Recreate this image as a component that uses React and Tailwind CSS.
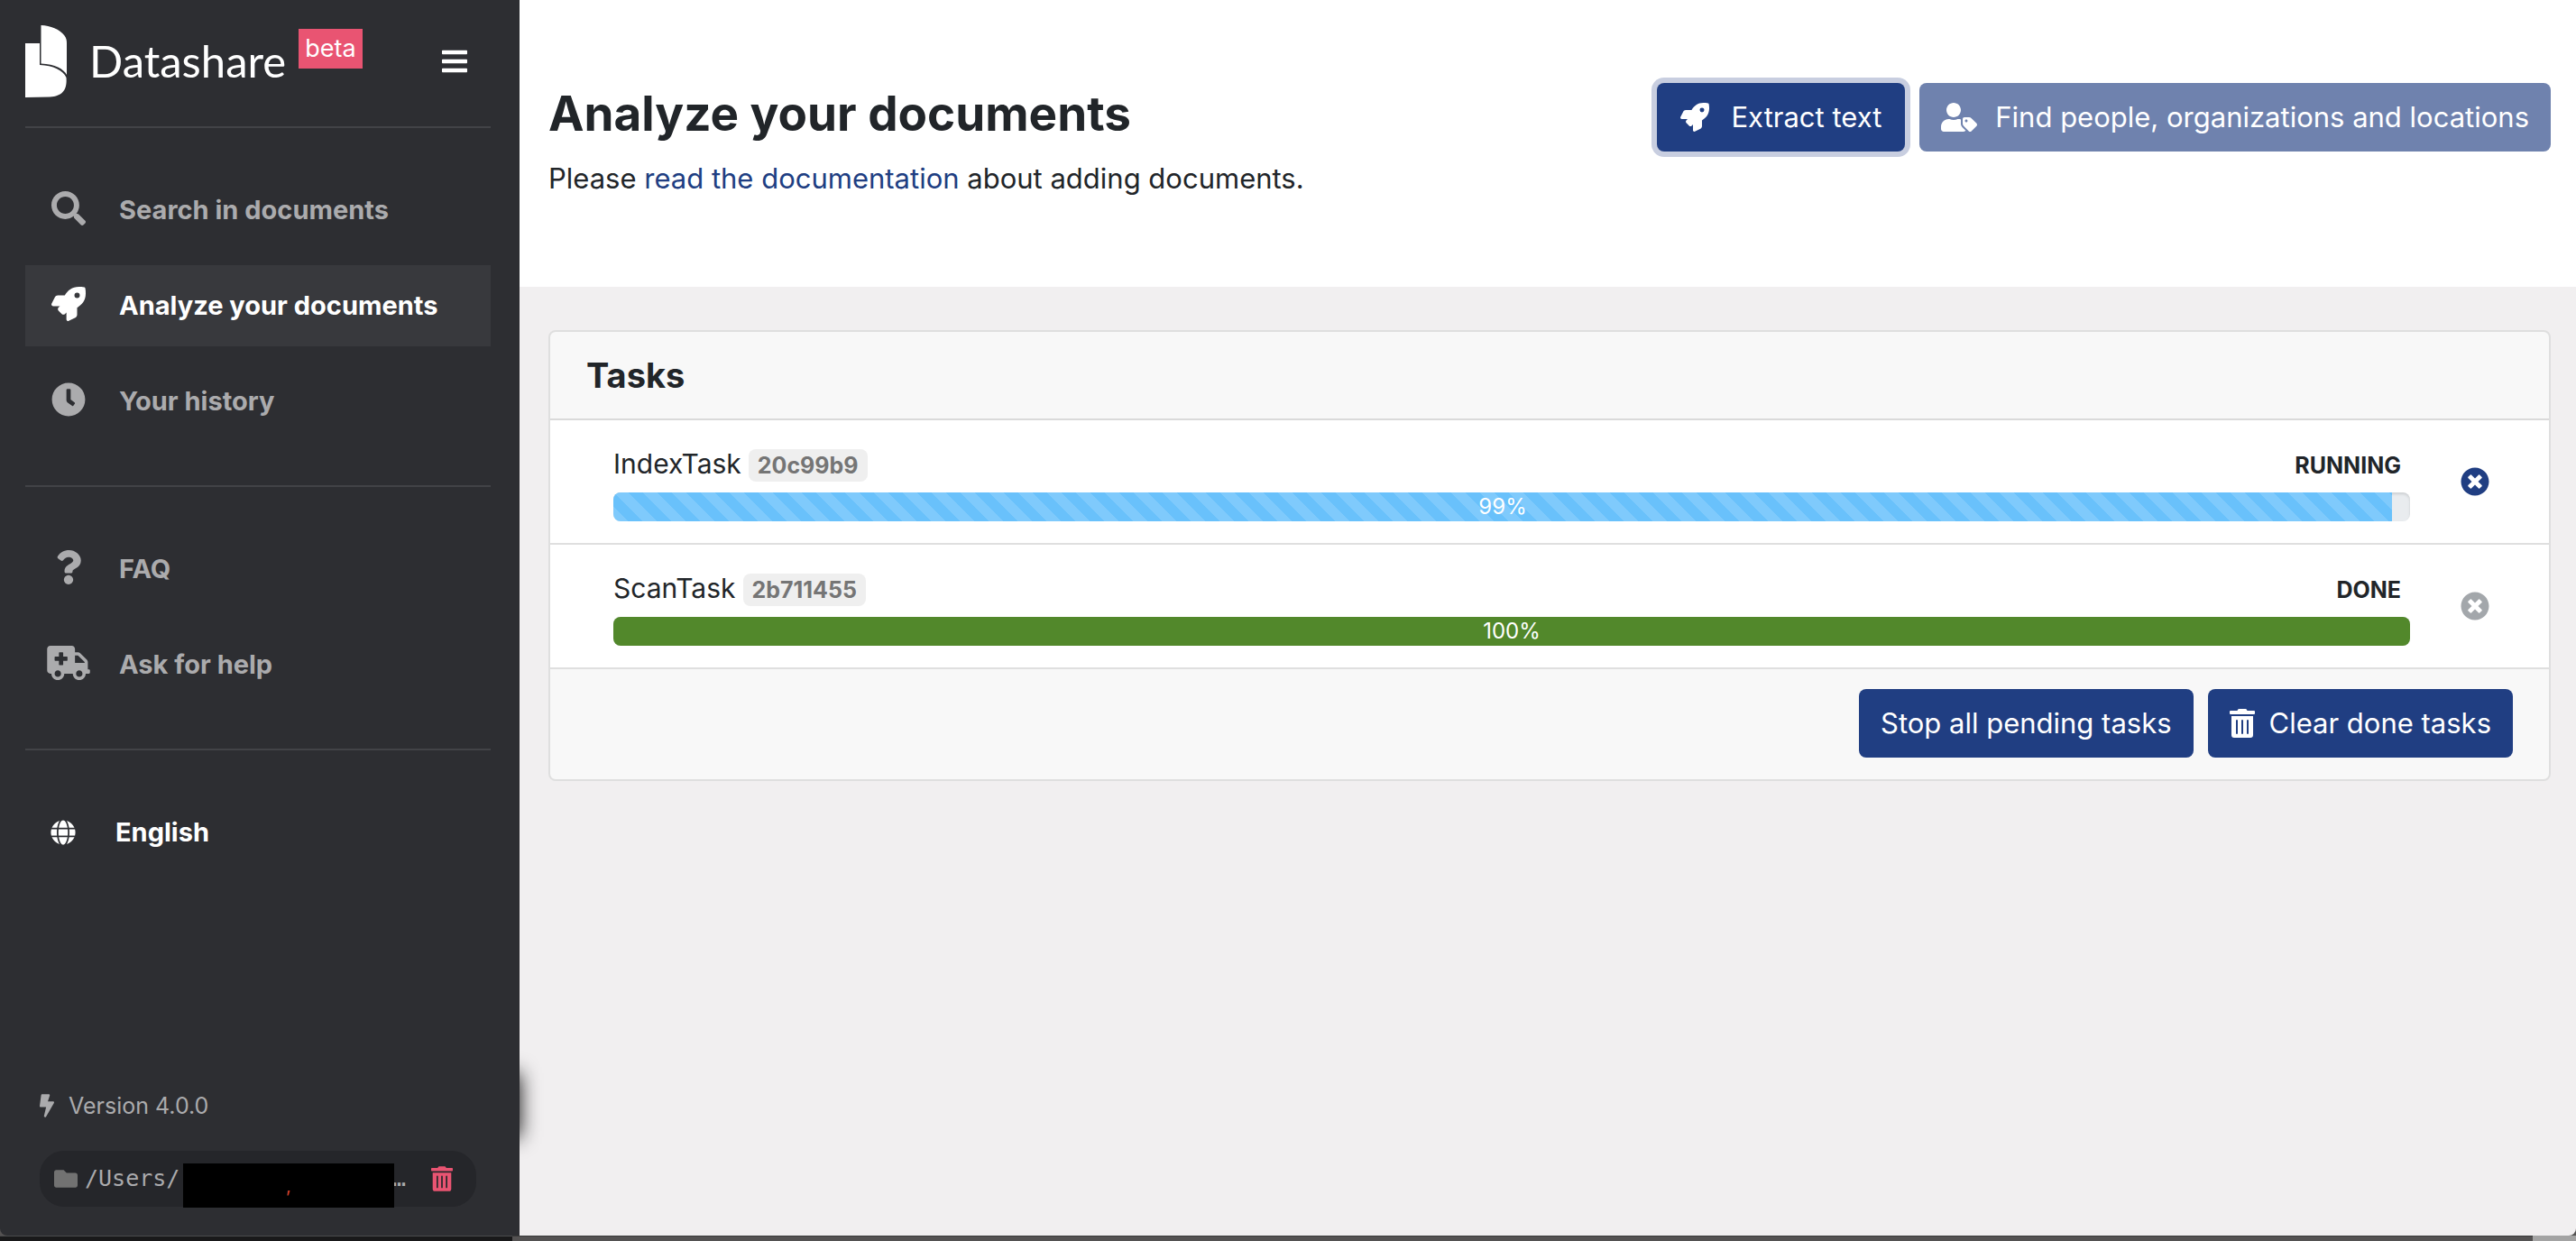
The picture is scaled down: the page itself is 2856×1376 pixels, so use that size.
import {
  FaAmbulance,
  FaBars,
  FaBolt,
  FaClock,
  FaFolder,
  FaGlobe,
  FaQuestion,
  FaRocket,
  FaSearch,
  FaTimesCircle,
  FaTrashAlt,
  FaUserTag,
} from "react-icons/fa";

const tasks = [
  { name: "IndexTask", id: "20c99b9", state: "RUNNING", progress: 99 },
  { name: "ScanTask", id: "2b711455", state: "DONE", progress: 100 },
];

function NavItem({ icon: Icon, label, active }) {
  return (
    <li>
      <a
        href="#"
        aria-current={active ? "page" : undefined}
        className={
          active
            ? "flex items-center gap-8 bg-[#38393d] px-6 py-6 text-white"
            : "flex items-center gap-8 px-6 py-6 text-[#ababad]"
        }
      >
        <Icon className="mb-1 h-[38px] w-12 shrink-0" />
        <span className="text-[29px] leading-[42px] font-bold">{label}</span>
      </a>
    </li>
  );
}

function Divider() {
  return <hr className="border-0 border-t-2 border-[#424347]" />;
}

function Logo() {
  return (
    <svg viewBox="0 0 46 80" className="h-20 w-[46px] shrink-0 fill-white" aria-hidden="true">
      <path d="M17.500 0C28 .3 38 4.500 43.500 11.500C45.500 14 46 17 46 20V55C42.500 48.500 33 43 17.500 42.500Z" />
      <path d="M0 20H16V44C31 44.500 42 50 45.500 58C46.500 70 42.500 79 27 79.500L0 80Z" />
    </svg>
  );
}

function Sidebar() {
  return (
    <aside className="relative flex w-[576px] shrink-0 flex-col">
      <div className="absolute top-[1190px] right-0 h-[71px] w-10 shadow-[0_0_22px_0_rgba(0,0,0,0.95)]" />
      <div className="relative flex grow flex-col rounded-bl-lg bg-[#2d2e32] pr-8 pl-7">
        <div className="flex items-start pt-7 pb-8">
          <a href="#" className="flex items-start text-white">
            <Logo />
            <span className="mt-2 ml-[25px] font-['Lato'] text-[49px] leading-[62px]">Datashare</span>
            <span className="mt-1 ml-3.5 bg-[#e95472] px-[7px] text-[27px] leading-[44px]">beta</span>
          </a>
          <button type="button" aria-label="Toggle menu" className="mt-6 mr-[26px] ml-auto text-white">
            <FaBars className="h-8 w-7" />
          </button>
        </div>
        <Divider />
        <ul className="flex flex-col gap-4 pt-[46px] pb-12">
          <NavItem icon={FaSearch} label="Search in documents" />
          <NavItem icon={FaRocket} label="Analyze your documents" active />
          <NavItem icon={FaClock} label="Your history" />
        </ul>
        <Divider />
        <ul className="flex flex-col gap-4 pt-[46px] pb-12">
          <NavItem icon={FaQuestion} label="FAQ" />
          <NavItem icon={FaAmbulance} label="Ask for help" />
        </ul>
        <Divider />
        <button
          type="button"
          className="mt-[46px] flex items-center gap-11 px-7 py-6 text-left text-white"
        >
          <FaGlobe className="h-7 w-7" />
          <span className="text-[29px] leading-[42px] font-bold">English</span>
        </button>
        <div className="mt-auto mr-4 mb-8 ml-4">
          <p className="flex items-center gap-4 text-[25px] leading-9 text-[#ababad]">
            <FaBolt className="h-[26px] w-4" />
            Version 4.0.0
          </p>
          <div className="relative mt-8 flex h-[62px] items-center rounded-[27px] bg-[#25262a] pr-[26px] pl-4">
            <FaFolder className="h-[26px] w-[26px] text-[#727272]" />
            <span className="ml-2 font-['DejaVu_Sans_Mono',monospace] text-[25px] leading-9 text-[#ababad]">
              /Users/
            </span>
            <span className="ml-auto font-['DejaVu_Sans_Mono',monospace] text-[25px] leading-9 text-[#ababad]">
              …
            </span>
            <button type="button" aria-label="Delete" className="ml-[28px] text-[#e95472]">
              <FaTrashAlt className="h-7 w-6" />
            </button>
            <span className="absolute top-3.5 left-[159px] h-[49px] w-[234px] bg-black text-center text-[20px] leading-[50px] text-[#d8432f]">
              ,
            </span>
          </div>
        </div>
      </div>
    </aside>
  );
}

function Task({ name, id, state, progress }) {
  const running = state === "RUNNING";
  return (
    <li className="flex items-center gap-14 border-b-2 border-[#dfdfdf] bg-white py-6 pr-[66px] pl-[70px]">
      <div className="grow">
        <div className="flex h-12 items-baseline gap-2 leading-[48px]">
          <span className="text-[30px]">{name}</span>
          <span className="rounded-lg bg-[#efefef] px-2.5 text-[25px] leading-9 font-bold text-[#757575]">{id}</span>
          <span className="ml-auto pr-2.5 text-[25px] font-bold">{state}</span>
        </div>
        <div
          role="progressbar"
          aria-label={name}
          aria-valuenow={progress}
          className="mt-2 flex h-8 overflow-hidden rounded-lg bg-[#e9ecef] shadow-[inset_0_2px_3px_rgba(0,0,0,0.12)]"
        >
          <div
            style={{ width: `${progress}%` }}
            className={
              running
                ? "bg-[#69c1fb] bg-[linear-gradient(45deg,rgba(255,255,255,0.15)_25%,transparent_25%,transparent_50%,rgba(255,255,255,0.15)_50%,rgba(255,255,255,0.15)_75%,transparent_75%,transparent)] bg-[length:32px_32px] text-center text-[24px] leading-8 text-white"
                : "bg-[#52882b] text-center text-[24px] leading-8 text-white"
            }
          >
            {progress}%
          </div>
        </div>
      </div>
      <button
        type="button"
        aria-label={`Stop ${name}`}
        disabled={!running}
        className="text-[#203e82] disabled:text-[#a3a7ab]"
      >
        <FaTimesCircle className="h-8 w-8" />
      </button>
    </li>
  );
}

export default function App() {
  return (
    <div className="flex min-h-screen flex-col bg-[#545252] font-['Inter',sans-serif] text-[#212529]">
      <div className="flex grow">
        <Sidebar />
        <main className="min-w-0 grow rounded-br-lg bg-[#f1eff0]">
          <header className="flex items-start justify-between bg-white pt-[92px] pr-7 pb-24 pl-8">
            <div>
              <h1 className="text-[53px] leading-[68px] font-bold">Analyze your documents</h1>
              <p className="mt-3.5 text-[31px] leading-[48px]">
                Please{" "}
                <a href="#" className="text-[#203e82]">
                  read the documentation
                </a>{" "}
                about adding documents.
              </p>
            </div>
            <div className="flex gap-4 text-[31px] leading-[48px] text-white">
              <button
                type="button"
                className="flex items-center gap-6 rounded-lg bg-[#203e82] px-[26px] py-3.5 ring-6 ring-[#c8cee0]"
              >
                <FaRocket className="h-8 w-8" />
                Extract text
              </button>
              <button
                type="button"
                disabled
                className="flex items-center gap-5 rounded-lg bg-[#6f82ae] px-6 py-3.5"
              >
                <FaUserTag className="h-8 w-10" />
                Find people, organizations and locations
              </button>
            </div>
          </header>
          <section className="mt-12 mr-7 ml-8 overflow-hidden rounded-lg border-2 border-[#dfdfdf] bg-[#f8f8f8]">
            <h2 className="border-b-2 border-[#dadada] px-10 py-6 text-[38px] leading-[48px] font-bold">Tasks</h2>
            <ul>
              {tasks.map((task) => (
                <Task key={task.id} {...task} />
              ))}
            </ul>
            <div className="flex justify-end gap-4 px-10 pt-[22px] pb-6 text-[31px] leading-[48px] text-white">
              <button type="button" className="rounded-lg bg-[#203e82] px-6 py-3.5">
                Stop all pending tasks
              </button>
              <button type="button" className="flex items-center gap-4 rounded-lg bg-[#203e82] px-6 py-3.5">
                <FaTrashAlt className="h-8 w-7" />
                Clear done tasks
              </button>
            </div>
          </section>
        </main>
      </div>
      <div className="flex h-1.5">
        <div className="w-[568px] border-t border-[#4a4b4d] bg-[#19191a]" />
        <div className="grow border-t border-[#3a3a3a] bg-[#545252]" />
        <div className="w-12 bg-[#a3a3a3]" />
      </div>
    </div>
  );
}
